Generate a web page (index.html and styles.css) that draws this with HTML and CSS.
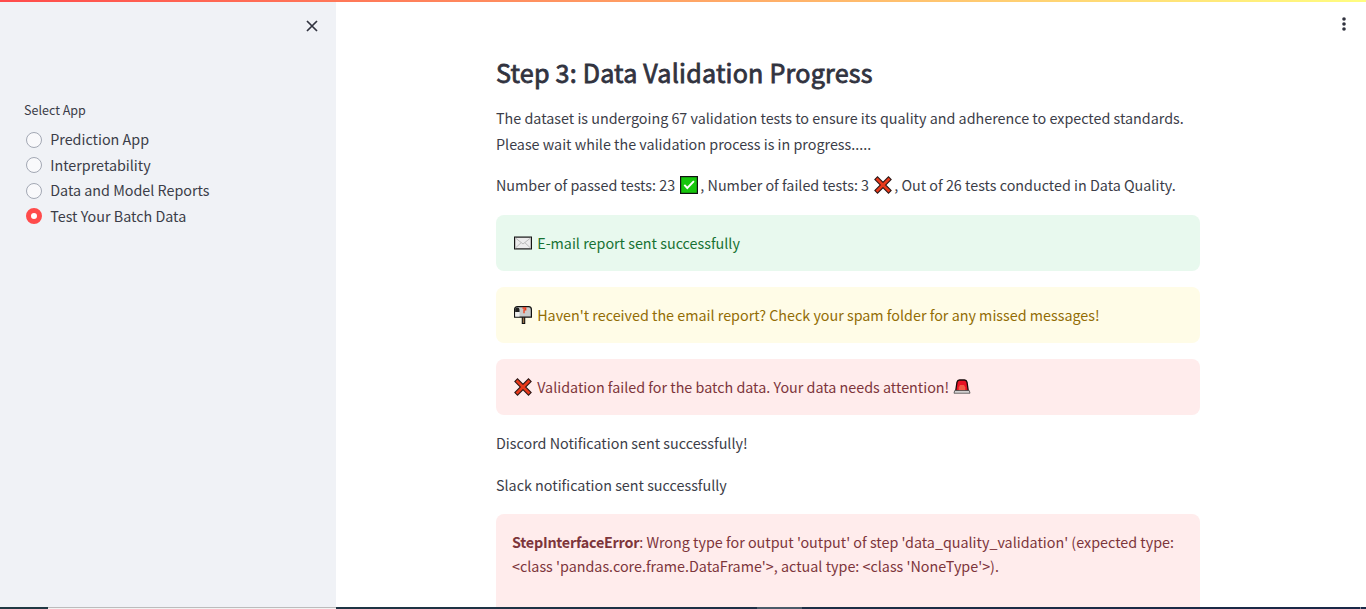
FILE: index.html
```
<!DOCTYPE html>
<html lang="en">
<head>
<meta charset="utf-8">
<title>Data Validation</title>
<link rel="stylesheet" href="styles.css">
</head>
<body>
<svg class="defs" width="0" height="0">
  <symbol id="cross" viewBox="0 0 18 18">
    <path d="M3.5 3.5 14.5 14.5M14.5 3.5 3.5 14.5" stroke="#241313" stroke-width="4.8" stroke-linecap="square"/>
    <path d="M3.5 3.5 14.5 14.5M14.5 3.5 3.5 14.5" stroke="#e8391b" stroke-width="2.8" stroke-linecap="square"/>
  </symbol>
</svg>
<div class="decoration"></div>
<div class="app">
  <aside class="sidebar">
    <div class="sidebar-top">
      <svg class="close" viewBox="0 0 12 12"><path d="M1 1 11 11M11 1 1 11" stroke="#31333f" stroke-width="1.7" fill="none"/></svg>
    </div>
    <div class="group-label">Select App</div>
    <div class="options">
      <div class="option"><span class="radio"></span><span class="option-text">Prediction App</span></div>
      <div class="option"><span class="radio"></span><span class="option-text">Interpretability</span></div>
      <div class="option"><span class="radio"></span><span class="option-text">Data and Model Reports</span></div>
      <div class="option"><span class="radio checked"></span><span class="option-text">Test Your Batch Data</span></div>
    </div>
  </aside>
  <main class="main">
    <svg class="menu" viewBox="0 0 4 14" fill="#31333f"><circle cx="2" cy="2" r="1.8"/><circle cx="2" cy="7" r="1.8"/><circle cx="2" cy="12" r="1.8"/></svg>
    <div class="content">
      <h2>Step 3: Data Validation Progress</h2>
      <p>The dataset is undergoing 67 validation tests to ensure its quality and adherence to expected standards.<br>Please wait while the validation process is in progress.....</p>
      <p class="counts"><span>Number of passed tests: 23</span><svg class="ico mark" viewBox="0 0 18 18"><rect x=".6" y=".6" width="16.8" height="16.8" fill="#16c60c" stroke="#111" stroke-width="1.2"/><path d="m4.3 8.8 3 3.2 6.6-6.8" stroke="#fff" stroke-width="1.9" fill="none"/></svg><span>, Number of failed tests: 3</span><svg class="ico mark"><use href="#cross"/></svg><span>, Out of 26 tests conducted in Data Quality.</span></p>
      <div class="alert success"><svg class="ico" viewBox="0 0 18 18"><rect x=".6" y="3.1" width="16.8" height="11.8" fill="#ececec" stroke="#151515" stroke-width="1.2"/><path d="m1.5 4 7.5 6 7.5-6M1.5 14l5.6-5.3M16.5 14l-5.6-5.3" stroke="#bbb" fill="none"/></svg><span>E-mail report sent successfully</span></div>
      <div class="alert warning"><svg class="ico" viewBox="0 0 18 18"><path d="M8.3 10.5h2.4v7H8.3z" fill="#99704a" stroke="#111" stroke-width="1.1"/><path d="M3.5.7h11.2q2.7 0 2.7 3v7.5H.6V3.6Q.6.7 3.5.7Z" fill="#c8cbcc" stroke="#111" stroke-width="1.2"/><path d="M1.2 6V3.6q0-2.2 2.1-2.2T5.5 3.8V6Z" fill="#222"/><path d="M1.2 6h4.3v4.6H1.2Z" fill="#eee"/><path d="M8.5 2h3.2v1.8H10v3.4" stroke="#f03a17" stroke-width="1.3" fill="none"/></svg><span>Haven't received the email report? Check your spam folder for any missed messages!</span></div>
      <div class="alert error"><svg class="ico"><use href="#cross"/></svg><span>Validation failed for the batch data. Your data needs attention!</span><svg class="ico siren" viewBox="0 0 18 18"><path d="M2.7 13 4 4.2Q4.5 2 6.5 2h5q2 0 2.5 2.2L15.3 13Z" fill="#e81224" stroke="#180808" stroke-width="1.3"/><path d="M5.7 12.5V9.5L7 7h4l1.3 2.5v3Z" fill="#f25a45"/><path d="M1.7 12.6h14.6l.7 2.6H1Z" fill="#ddd" stroke="#444" stroke-width=".8"/></svg></div>
      <div class="notes">
        <p>Discord Notification sent successfully!</p>
        <p>Slack notification sent successfully</p>
      </div>
      <div class="exception"><div><b>StepInterfaceError</b>: Wrong type for output 'output' of step 'data_quality_validation' (expected type:</div><div>&lt;class 'pandas.core.frame.DataFrame'&gt;, actual type: &lt;class 'NoneType'&gt;).</div></div>
    </div>
  </main>
</div>
<div class="taskbar"><div class="search"></div><div class="active-task"></div><div class="edge"></div></div>
</body>
</html>
```
FILE: styles.css
```
* { box-sizing: border-box; }
body {
  margin: 0;
  height: 609px;
  overflow: hidden;
  display: flex;
  flex-direction: column;
  font-family: "Noto Sans CJK SC", "Noto Sans", sans-serif;
  font-size: 14.33px;
  line-height: 25.6px;
  color: #3b3d48;
  background: #fff;
}
.defs { position: absolute; }
.decoration { flex: none; height: 2px; background: linear-gradient(90deg, #ff4b4b, #fffd80); }
.app { flex: none; height: 605px; display: flex; overflow: hidden; }
.sidebar { width: 336px; background: #f0f2f6; }
.sidebar-top { height: 97px; padding: 18px 18px 0 0; display: flex; justify-content: flex-end; }
.close { width: 12px; height: 12px; }
.group-label { height: 28px; padding-left: 24px; font-size: 12.54px; line-height: 21px; }
.options { padding-left: 26px; }
.option { height: 25.5px; line-height: 25px; display: flex; align-items: center; gap: 8.2px; }
.option-text { padding-bottom: 2px; }
.radio { width: 16px; height: 16px; border: 1px solid #a3a8b4; border-radius: 50%; background: #f9f9fb; }
.radio.checked { border: 5px solid #ff4b4b; background: #fff; }
.main { flex: 1; padding-left: 160px; }
.menu { position: absolute; left: 1342px; top: 17px; width: 4px; height: 14px; }
.content { width: 704px; padding-top: 49px; white-space: nowrap; }
h2 {
  margin: 0 0 12px;
  height: 42px;
  line-height: 42px;
  font-size: 25.08px;
  font-weight: 400;
  letter-spacing: 0.22px;
  color: #31333f;
  -webkit-text-stroke: 0.8px #31333f;
}
p { margin: 0 0 16px; }
.counts { display: flex; align-items: center; height: 25.6px; margin-bottom: 17px; }
.ico { width: 18px; height: 18px; flex: none; }
.mark { margin: 0 2.2px 0 5px; }
.alert { height: 56px; margin-bottom: 16px; padding: 0 18px; border-radius: 8px; display: flex; align-items: center; gap: 5.2px; }
.success { background: #e8f9ee; color: #177233; }
.warning { background: #fffce7; color: #926c05; }
.warning .ico { position: relative; top: 0.6px; }
.error { background: #ffecec; color: #7d353b; }
.siren { margin-left: -1px; }
.notes { height: 83.2px; margin-top: -0.6px; margin-bottom: 0.6px; }
.notes p { margin-bottom: 16.4px; }
.exception { height: 120px; padding: 16px; border-radius: 8px; background: #ffecec; color: #7d353b; line-height: 24px; }
.exception b { letter-spacing: -0.23px; }
.taskbar { flex: none; height: 2px; display: flex; background: linear-gradient(90deg, #203943, #1a2847); }
.search { width: 288px; margin-left: 48px; background: #f3f3f3; border-top: 1px solid #bcbcbc; }
.active-task { width: 45px; margin-left: 421px; background: #4b5b69; }
.edge { width: 1px; margin-left: 558px; background: #7c8594; }
```
